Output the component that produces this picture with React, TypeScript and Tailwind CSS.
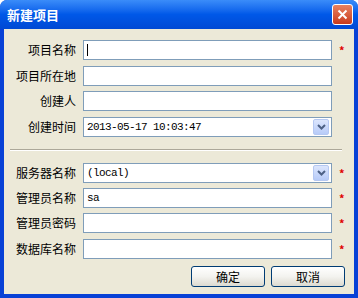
import React from "react";

const Star = () => <span className="ml-[7px] w-[8px] text-[11px] leading-none text-[#e00000] font-bold">*</span>;

const Field = ({ label, value, star, cursor }: { label: string; value?: string; star?: boolean; cursor?: boolean }) => (
    <div className="flex h-[20px] items-center">
        <div className="w-[72px] text-right text-[12px] leading-none text-black">{label}</div>
        <div className="ml-[7px] flex h-[20px] w-[249px] items-center border border-[#7f9db9] bg-white pl-[3px] font-['Liberation_Mono',monospace] text-[11px] tracking-[-0.6px] text-black">
            {cursor && <div className="h-[12px] w-[1px] bg-black" />}
            {value}
        </div>
        {star && <Star />}
    </div>
);

const Combo = ({ label, value, star }: { label: string; value: string; star?: boolean }) => (
    <div className="flex h-[20px] items-center">
        <div className="w-[72px] text-right text-[12px] leading-none text-black">{label}</div>
        <div className="ml-[7px] flex h-[20px] w-[249px] items-center justify-between border border-[#7f9db9] bg-white pl-[3px] pr-[2px] font-['Liberation_Mono',monospace] text-[11px] tracking-[-0.6px] text-black">
            <span>{value}</span>
            <div className="flex h-[16px] w-[16px] items-center justify-center rounded-[2px] border border-[#b5c8f2] bg-gradient-to-b from-[#dce6fd] to-[#b7cbf8]">
                <svg width="9" height="6" viewBox="0 0 9 6">
                    <path d="M1 1 L4.5 4.5 L8 1" stroke="#4d6185" strokeWidth="2" fill="none" />
                </svg>
            </div>
        </div>
        {star && <Star />}
    </div>
);

const Btn = ({ children }: { children: React.ReactNode }) => (
    <button className="flex h-[21px] w-[74px] items-center justify-center rounded-[3px] border border-[#003c74] bg-gradient-to-b from-[#ffffff] via-[#f3f3ef] to-[#dcdad0] text-[12px] text-black">
        {children}
    </button>
);

export default function App() {
    return (
        <div className="h-[298px] w-[358px] font-['Noto_Sans_CJK_SC',sans-serif]">
            <div className="flex h-full flex-col rounded-t-[7px] bg-[#0841d6]">
                <div className="flex h-[29px] items-center justify-between rounded-t-[7px] bg-gradient-to-b from-[#3a8cf9] via-[#0058e8] to-[#0049d4] pl-[7px] pr-[5px]">
                    <span className="text-[13px] font-bold text-white">新建项目</span>
                    <div className="flex h-[21px] w-[21px] items-center justify-center rounded-[3px] border border-white bg-gradient-to-b from-[#e8815f] to-[#c8391b]">
                        <svg width="11" height="11" viewBox="0 0 11 11">
                            <path d="M1.5 1.5 L9.5 9.5 M9.5 1.5 L1.5 9.5" stroke="white" strokeWidth="2" />
                        </svg>
                    </div>
                </div>
                <div className="mx-[4px] mb-[4px] flex flex-1 flex-col bg-[#ece9d8] pt-[11px]">
                    <Field label="项目名称" star cursor />
                    <div className="mt-[6px]"><Field label="项目所在地" /></div>
                    <div className="mt-[5px]"><Field label="创建人" /></div>
                    <div className="mt-[6px]"><Combo label="创建时间" value="2013-05-17 10:03:47" /></div>
                    <div className="ml-[6px] mr-[12px] mt-[12px] border-t border-b border-t-[#aca899] border-b-white" />
                    <div className="mt-[12px]"><Combo label="服务器名称" value="(local)" star /></div>
                    <div className="mt-[5px]"><Field label="管理员名称" value="sa" star /></div>
                    <div className="mt-[5px]"><Field label="管理员密码" star /></div>
                    <div className="mt-[6px]"><Field label="数据库名称" star /></div>
                    <div className="mt-[7px] flex justify-end gap-[6px] pr-[9px]">
                        <Btn>确定</Btn>
                        <Btn>取消</Btn>
                    </div>
                </div>
            </div>
        </div>
    );
}
